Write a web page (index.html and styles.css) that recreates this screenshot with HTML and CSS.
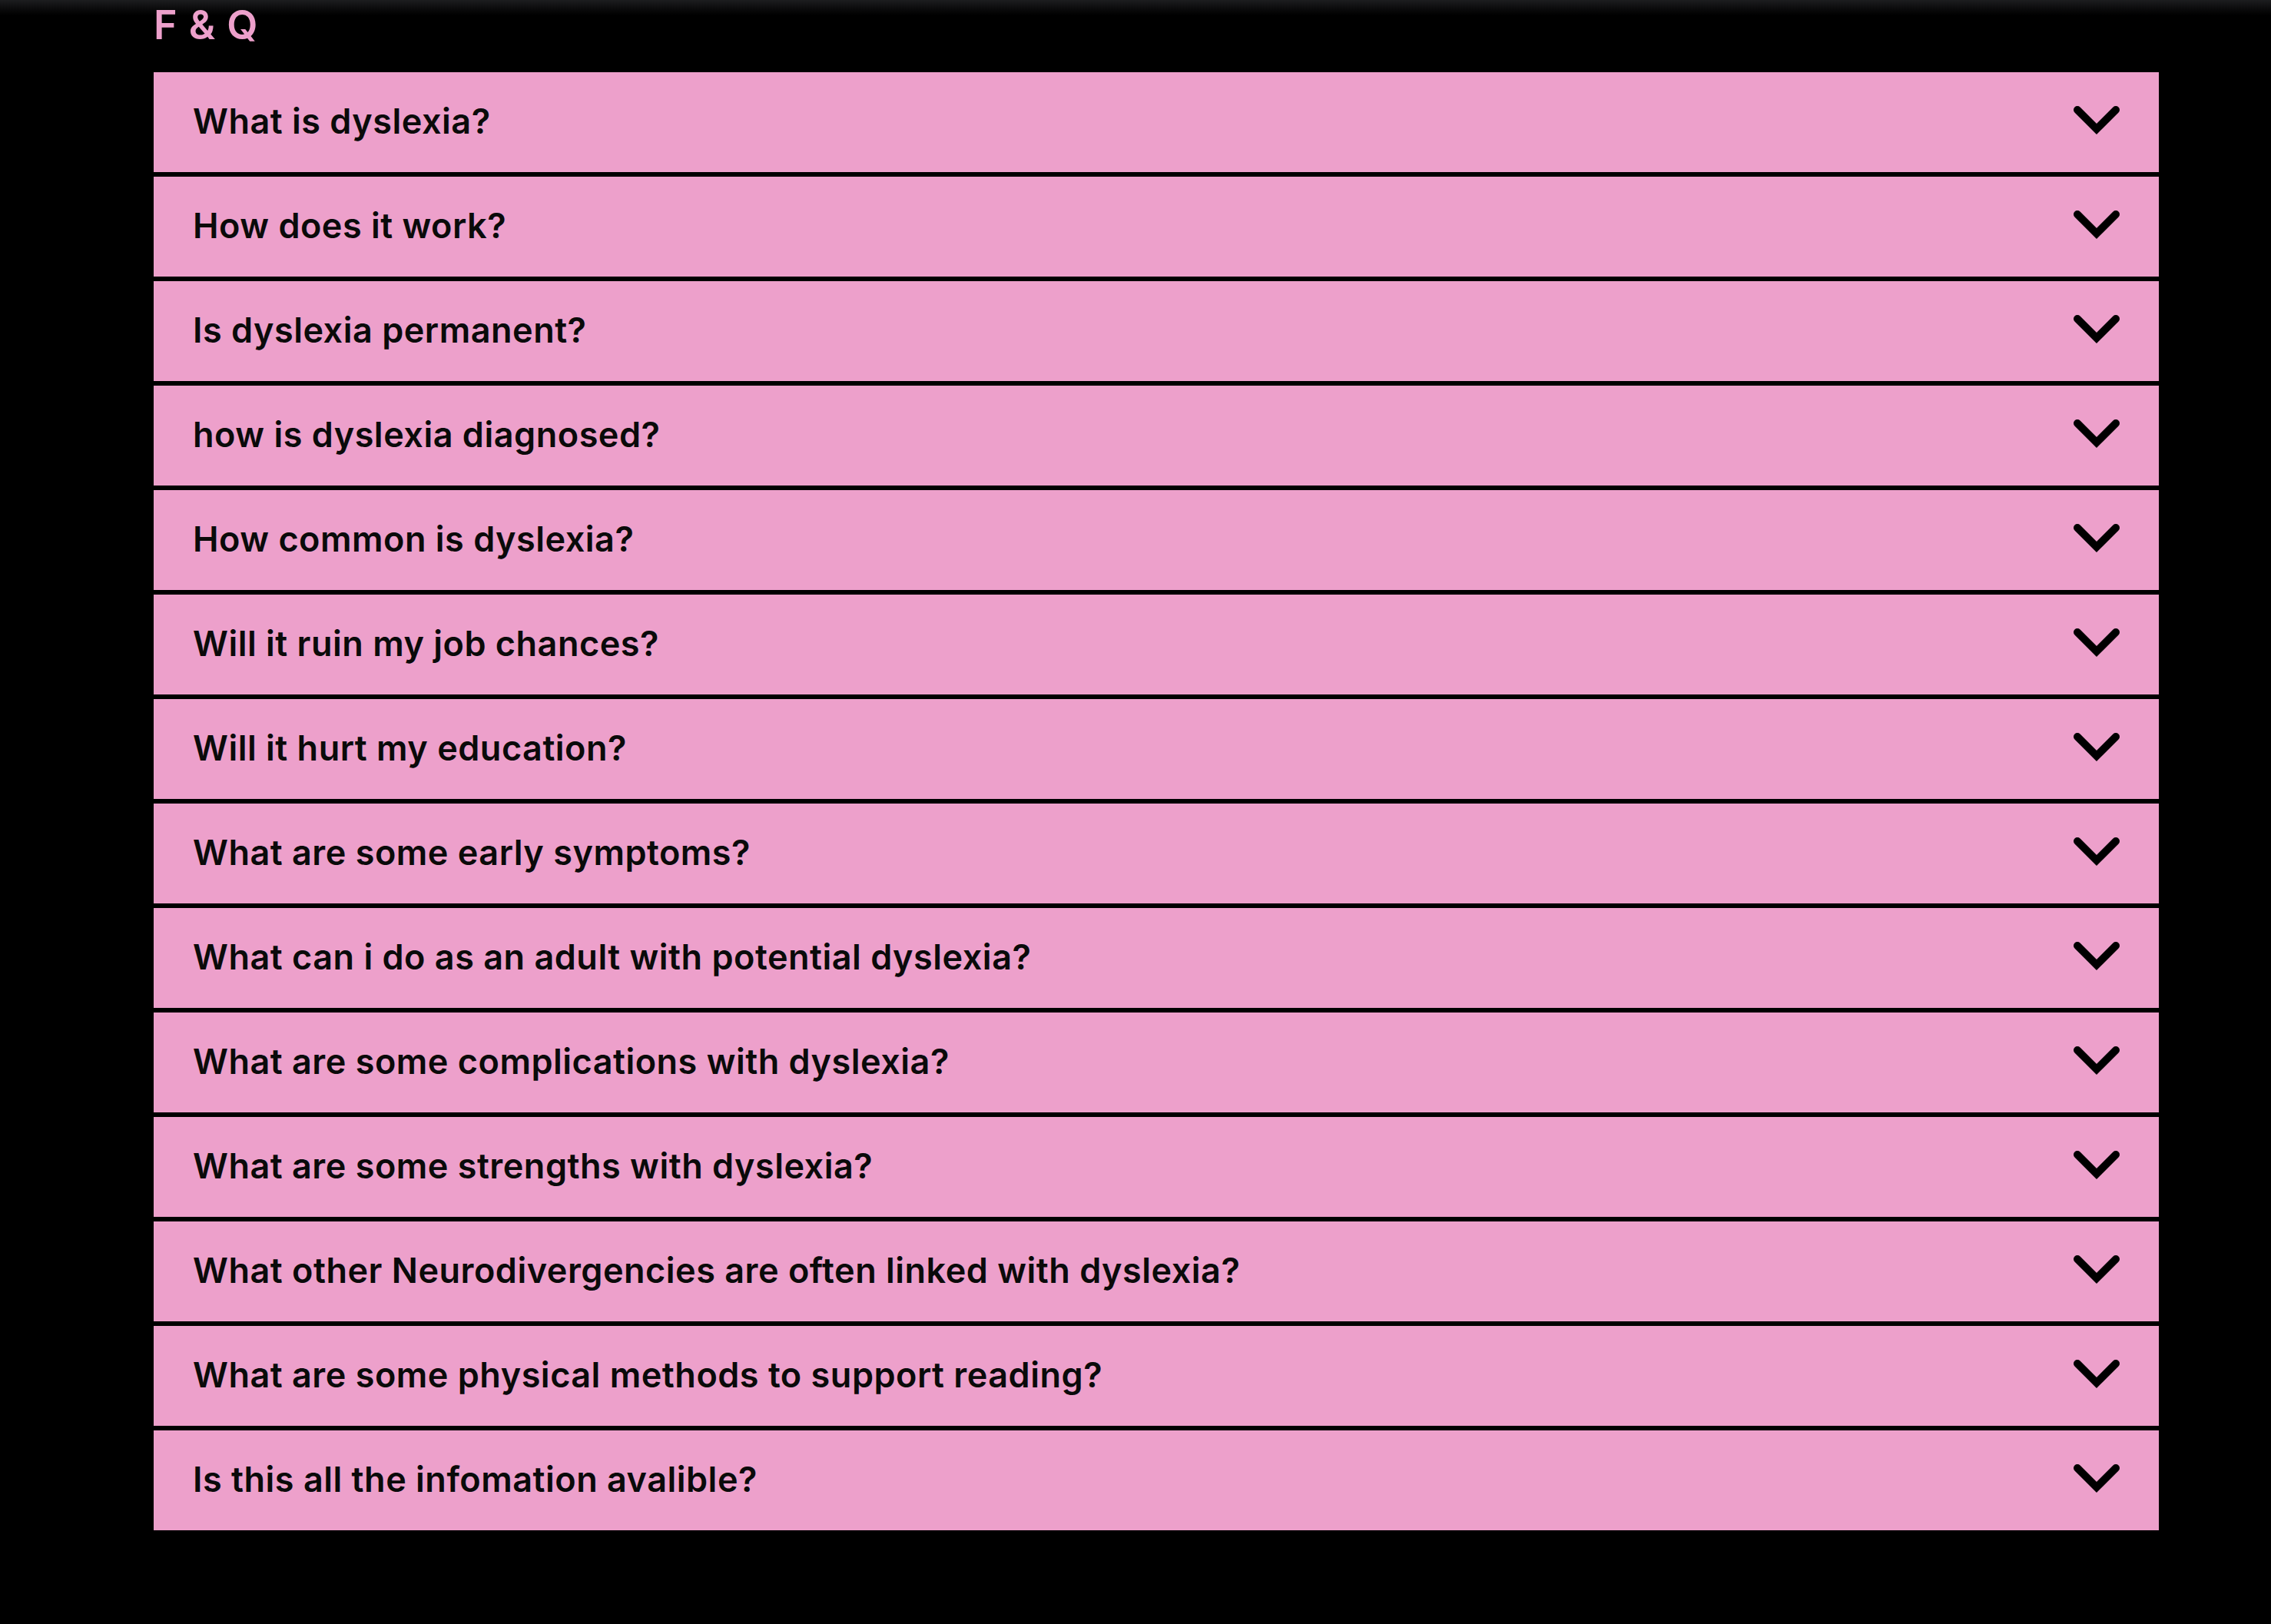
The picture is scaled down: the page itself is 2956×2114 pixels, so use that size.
FILE: index.html
```html
<!DOCTYPE html>
<html lang="en">
<head>
<meta charset="utf-8">
<title>F &amp; Q</title>
<link rel="stylesheet" href="styles.css">
</head>
<body>
<div class="topfade"></div>
<main class="faq">
  <h1 class="faq-title">F &amp; Q</h1>
  <div class="faq-list">
    <div class="faq-item"><span class="faq-q">What is dyslexia?</span><svg class="chev" viewBox="0 0 62 40"><polyline points="6,6 31,31 56,6"/></svg></div>
    <div class="faq-item"><span class="faq-q">How does it work?</span><svg class="chev" viewBox="0 0 62 40"><polyline points="6,6 31,31 56,6"/></svg></div>
    <div class="faq-item"><span class="faq-q">Is dyslexia permanent?</span><svg class="chev" viewBox="0 0 62 40"><polyline points="6,6 31,31 56,6"/></svg></div>
    <div class="faq-item"><span class="faq-q">how is dyslexia diagnosed?</span><svg class="chev" viewBox="0 0 62 40"><polyline points="6,6 31,31 56,6"/></svg></div>
    <div class="faq-item"><span class="faq-q">How common is dyslexia?</span><svg class="chev" viewBox="0 0 62 40"><polyline points="6,6 31,31 56,6"/></svg></div>
    <div class="faq-item"><span class="faq-q">Will it ruin my job chances?</span><svg class="chev" viewBox="0 0 62 40"><polyline points="6,6 31,31 56,6"/></svg></div>
    <div class="faq-item"><span class="faq-q">Will it hurt my education?</span><svg class="chev" viewBox="0 0 62 40"><polyline points="6,6 31,31 56,6"/></svg></div>
    <div class="faq-item"><span class="faq-q">What are some early symptoms?</span><svg class="chev" viewBox="0 0 62 40"><polyline points="6,6 31,31 56,6"/></svg></div>
    <div class="faq-item"><span class="faq-q">What can i do as an adult with potential dyslexia?</span><svg class="chev" viewBox="0 0 62 40"><polyline points="6,6 31,31 56,6"/></svg></div>
    <div class="faq-item"><span class="faq-q">What are some complications with dyslexia?</span><svg class="chev" viewBox="0 0 62 40"><polyline points="6,6 31,31 56,6"/></svg></div>
    <div class="faq-item"><span class="faq-q">What are some strengths with dyslexia?</span><svg class="chev" viewBox="0 0 62 40"><polyline points="6,6 31,31 56,6"/></svg></div>
    <div class="faq-item"><span class="faq-q">What other Neurodivergencies are often linked with dyslexia?</span><svg class="chev" viewBox="0 0 62 40"><polyline points="6,6 31,31 56,6"/></svg></div>
    <div class="faq-item"><span class="faq-q">What are some physical methods to support reading?</span><svg class="chev" viewBox="0 0 62 40"><polyline points="6,6 31,31 56,6"/></svg></div>
    <div class="faq-item"><span class="faq-q">Is this all the infomation avalible?</span><svg class="chev" viewBox="0 0 62 40"><polyline points="6,6 31,31 56,6"/></svg></div>
  </div>
</main>
</body>
</html>
```
FILE: styles.css
```css
html, body {
  margin: 0;
  padding: 0;
  background: #000;
  min-height: 100%;
}
body {
  position: relative;
  font-family: Inter, "Noto Sans", "Liberation Sans", sans-serif;
}
.topfade {
  position: absolute;
  top: 0;
  left: 0;
  right: 0;
  height: 20px;
  background: linear-gradient(to bottom, #1c1d1f 0%, #0a0a0b 60%, #000 100%);
}
.faq {
  position: relative;
  display: flex;
  flex-direction: column;
  gap: 35px;
  padding: 7px 0 0 200px;
  width: 2610px;
}
.faq-title {
  margin: 0;
  font-size: 52px;
  line-height: 52px;
  font-weight: 600;
  color: #eda0cb;
  letter-spacing: 3px;
  word-spacing: -4px;
}
.faq-list {
  display: flex;
  flex-direction: column;
  gap: 6px;
}
.faq-item {
  height: 130px;
  background: #eda0cb;
  display: flex;
  align-items: center;
  justify-content: space-between;
  padding: 0 50px 0 51px;
  box-sizing: border-box;
}
.faq-q {
  font-size: 45px;
  font-weight: 600;
  color: #0a0a0a;
  letter-spacing: 0.5px;
  margin-bottom: 4px;
}
.chev {
  width: 62px;
  height: 40px;
  fill: none;
  stroke: #000;
  stroke-width: 10;
  stroke-linecap: round;
  stroke-linejoin: miter;
  margin-top: -4px;
}
```
